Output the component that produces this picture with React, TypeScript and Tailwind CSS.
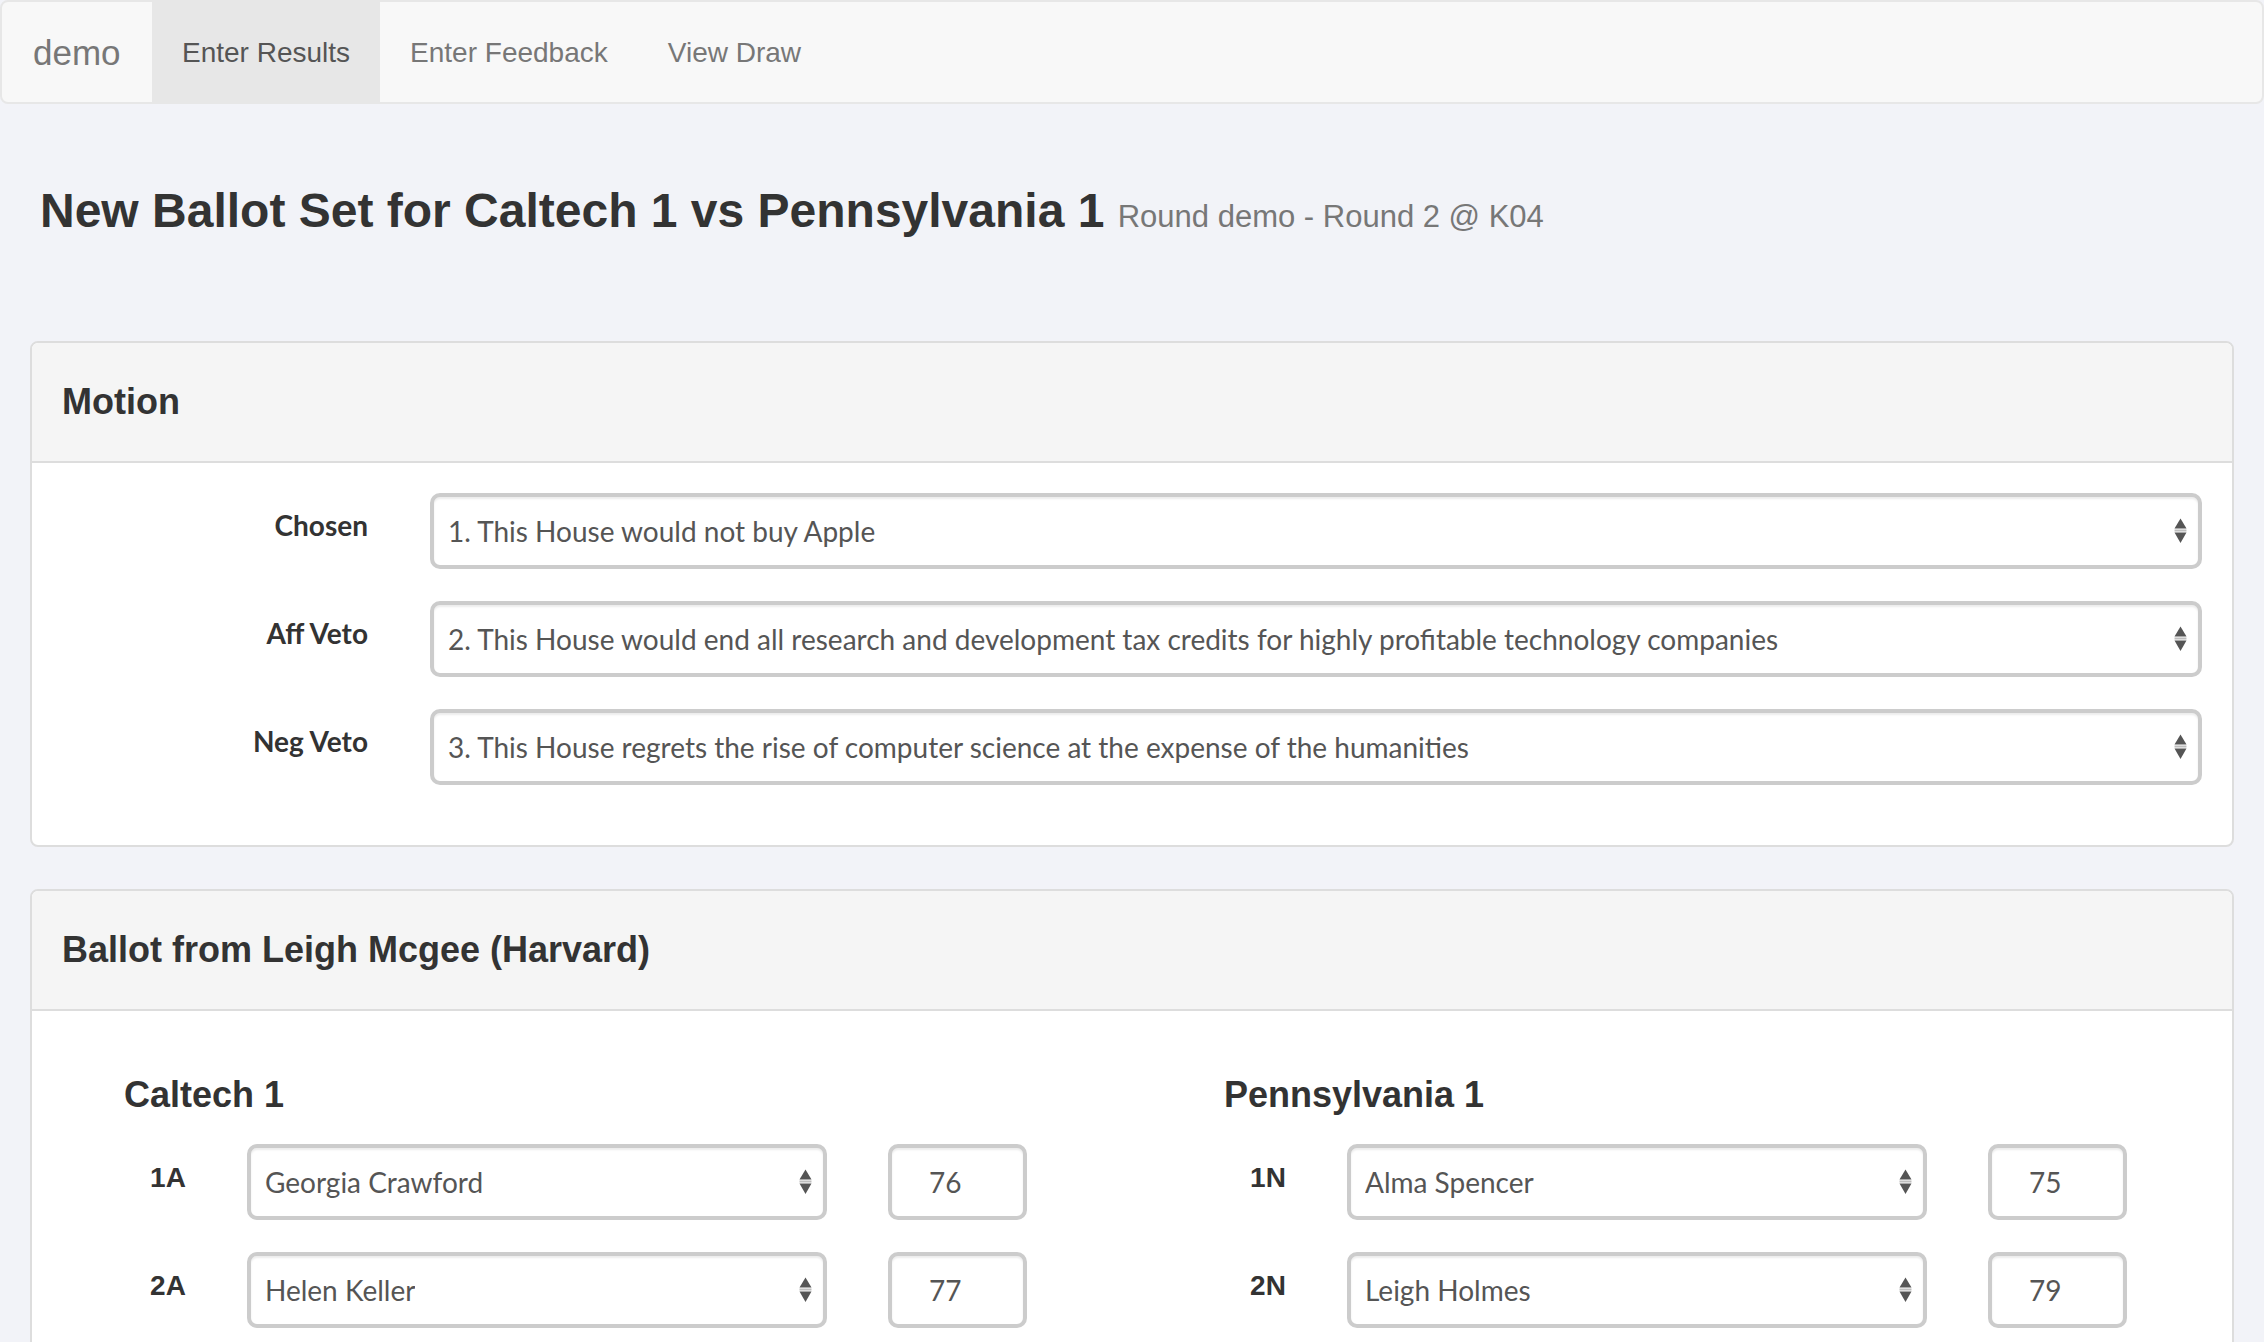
import React from "react";

const Arrows = () => (
  <svg width="13" height="26" viewBox="0 0 13 26" className="shrink-0">
    <polygon points="0.5,10.5 6.5,0.5 12.5,10.5" fill="#555555" />
    <rect x="0.5" y="11.5" width="12" height="2" fill="#bdbdbd" />
    <polygon points="0.5,14.5 12.5,14.5 6.5,25" fill="#555555" />
  </svg>
);

function SelectBox({ text, className = "" }: { text: string; className?: string }) {
  return (
    <div
      className={`flex h-[76px] items-center justify-between rounded-[10px] border-[4px] border-[#cccccc] bg-white pl-[14px] pr-[11px] shadow-[inset_0_2px_2px_rgba(0,0,0,0.075)] font-['Lato',sans-serif] text-[28px] text-[#555555] ${className}`}
    >
      <span className="truncate">{text}</span>
      <Arrows />
    </div>
  );
}

function ScoreBox({ value }: { value: string }) {
  return (
    <div className="ml-[61px] flex h-[76px] w-[139px] items-center rounded-[10px] border-[4px] border-[#cccccc] bg-white pl-[37px] shadow-[inset_0_2px_2px_rgba(0,0,0,0.075)] font-['Lato',sans-serif] text-[28px] text-[#555555]">
      {value}
    </div>
  );
}

function MotionRow({ label, text }: { label: string; text: string }) {
  return (
    <div className="flex items-start">
      <div className="w-[306px] shrink-0 pt-[12px] text-right font-['Lato',sans-serif] text-[28px] font-bold leading-[40px] text-[#333333]">
        {label}
      </div>
      <SelectBox text={text} className="ml-[62px] flex-1 min-w-0" />
    </div>
  );
}

function SpeakerRow({ pos, name, score }: { pos: string; name: string; score: string }) {
  return (
    <div className="flex items-start">
      <div className="ml-[92px] w-[88px] shrink-0 pt-[14px] text-center text-[28px] font-bold leading-[40px] text-[#333333]">
        {pos}
      </div>
      <SelectBox text={name} className="ml-[35px] w-[580px] shrink-0" />
      <ScoreBox value={score} />
    </div>
  );
}

function TeamColumn({
  team,
  rows,
}: {
  team: string;
  rows: { pos: string; name: string; score: string }[];
}) {
  return (
    <div>
      <h4 className="mt-[64px] pl-[92px] text-[36px] font-bold leading-[1.1] text-[#333333]">{team}</h4>
      <div className="mt-[30px] flex flex-col gap-[32px]">
        {rows.map((r) => (
          <SpeakerRow key={r.pos} {...r} />
        ))}
      </div>
    </div>
  );
}

function PanelHeader({ title }: { title: string }) {
  return (
    <div className="flex h-[120px] items-center border-b-2 border-[#dddddd] bg-[#f5f5f5] px-[30px]">
      <h3 className="text-[36px] font-bold leading-[1.1] text-[#333333]">{title}</h3>
    </div>
  );
}

export default function App() {
  return (
    <div className="min-h-screen bg-[#f2f3f8] font-['Liberation_Sans',Arial,sans-serif]">
      <nav className="flex h-[104px] items-stretch rounded-[8px] border-2 border-[#e7e7e7] bg-[#f8f8f8]">
        <div className="flex w-[150px] items-center pl-[31px] pt-[3px] text-[35px] text-[#777777]">demo</div>
        <div className="flex items-center bg-[#e7e7e7] px-[30px] pt-[2px] text-[28px] text-[#555555]">Enter Results</div>
        <div className="flex items-center px-[30px] pt-[2px] text-[28px] text-[#777777]">Enter Feedback</div>
        <div className="flex items-center px-[30px] pt-[2px] text-[28px] text-[#777777]">View Draw</div>
      </nav>

      <main className="px-[30px] pb-[40px]">
        <h3 className="mt-[81px] pl-[10px] text-[48px] font-bold leading-[1.1] text-[#333333]">
          New Ballot Set for Caltech 1 vs Pennsylvania 1{" "}
          <small className="text-[31px] font-normal text-[#777777]">Round demo - Round 2 @ K04</small>
        </h3>

        <section className="mt-[103px] overflow-hidden rounded-[8px] border-2 border-[#dddddd] bg-white">
          <PanelHeader title="Motion" />
          <div className="flex flex-col gap-[32px] px-[30px] pb-[60px] pt-[30px]">
            <MotionRow label="Chosen" text="1. This House would not buy Apple" />
            <MotionRow
              label="Aff Veto"
              text="2. This House would end all research and development tax credits for highly profitable technology companies"
            />
            <MotionRow
              label="Neg Veto"
              text="3. This House regrets the rise of computer science at the expense of the humanities"
            />
          </div>
        </section>

        <section className="mt-[42px] overflow-hidden rounded-[8px] border-2 border-[#dddddd] bg-white">
          <PanelHeader title="Ballot from Leigh Mcgee (Harvard)" />
          <div className="grid grid-cols-2 pb-[120px]">
            <TeamColumn
              team="Caltech 1"
              rows={[
                { pos: "1A", name: "Georgia Crawford", score: "76" },
                { pos: "2A", name: "Helen Keller", score: "77" },
              ]}
            />
            <TeamColumn
              team="Pennsylvania 1"
              rows={[
                { pos: "1N", name: "Alma Spencer", score: "75" },
                { pos: "2N", name: "Leigh Holmes", score: "79" },
              ]}
            />
          </div>
        </section>
      </main>
    </div>
  );
}
